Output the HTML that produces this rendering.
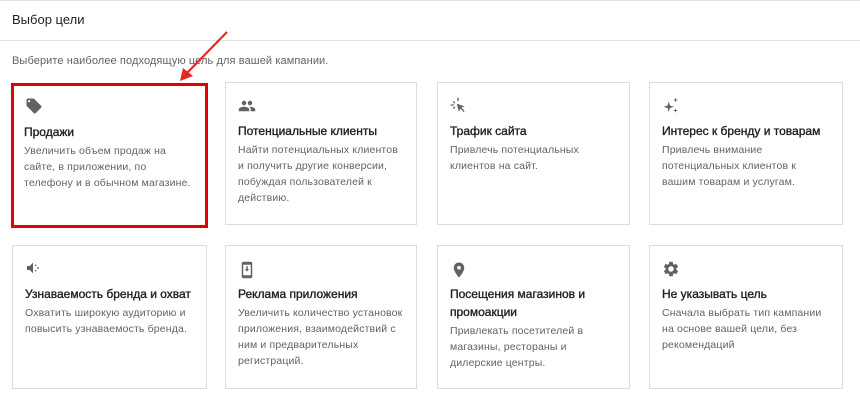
<!DOCTYPE html>
<html><head><meta charset="utf-8"><style>
body{margin:0;width:860px;height:407px;background:#fff;font-family:"Liberation Sans",Arial,sans-serif;position:relative;overflow:hidden}
.top{position:absolute;left:0;top:0;width:860px;height:1px;background:#e0e0e0}
.h{position:absolute;left:12px;top:12px;font-size:13px;color:#212121}
.sep{position:absolute;left:0;top:40px;width:860px;height:1px;background:#e0e0e0}
.sub{position:absolute;left:12px;top:55px;font-size:11px;color:#5f6368;letter-spacing:.1px}
.c{position:absolute;border:1px solid #dadce0;box-sizing:border-box;background:#fff}
.c svg{position:absolute;left:12px;top:14px}
.t{position:absolute;left:12px;top:39px;font-size:12px;color:#202124;line-height:18px;width:170px;-webkit-text-stroke:0.35px #202124}
.d{position:absolute;left:12px;font-size:10.5px;color:#5f6368;line-height:16px;width:170px;letter-spacing:.15px}
.red{border:3px solid #e50000}
</style></head><body>
<div class="top"></div>
<div class="h">Выбор цели</div>
<div class="sep"></div>
<div class="sub">Выберите наиболее подходящую цель для вашей кампании.</div>

<div class="c red" style="left:11px;top:83px;width:197px;height:145px">
<svg width="20" height="18" viewBox="0 0 24 24" style="left:10px;top:11px"><path fill="#5f6368" d="M21.4 11.6l-9-9C12.1 2.2 11.6 2 11 2H4c-1.1 0-2 .9-2 2v7c0 .6.2 1.1.6 1.4l9 9c.4.4.9.6 1.4.6s1-.2 1.4-.6l7-7c.4-.4.6-.9.6-1.4s-.2-1.1-.6-1.4zM5.5 7C4.7 7 4 6.3 4 5.5S4.7 4 5.5 4 7 4.7 7 5.5 6.3 7 5.5 7z"/></svg>
<div class="t" style="left:10px;top:37px">Продажи</div>
<div class="d" style="left:10px;top:57px">Увеличить объем продаж на сайте, в приложении, по телефону и в обычном магазине.</div>
</div>

<div class="c" style="left:225px;top:82px;width:192px;height:143px">
<svg width="18" height="18" viewBox="0 0 24 24"><path fill="#5f6368" d="M16 11c1.66 0 2.99-1.34 2.99-3S17.66 5 16 5c-1.66 0-3 1.34-3 3s1.34 3 3 3zm-8 0c1.66 0 2.99-1.34 2.99-3S9.66 5 8 5C6.34 5 5 6.34 5 8s1.34 3 3 3zm0 2c-2.33 0-7 1.17-7 3.5V19h14v-2.5c0-2.33-4.67-3.5-7-3.5zm8 0c-.29 0-.62.02-.97.05 1.16.84 1.97 1.970 1.97 3.45V19h6v-2.5c0-2.33-4.67-3.5-7-3.5z"/></svg>
<div class="t">Потенциальные клиенты</div>
<div class="d" style="top:59px;width:162px">Найти потенциальных клиентов и получить другие конверсии, побуждая пользователей к действию.</div>
</div>

<div class="c" style="left:437px;top:82px;width:193px;height:143px">
<svg width="16" height="16" viewBox="0 0 24 24"><path fill="#5f6368" d="M11 6h2V1h-2zM4 7.4L5.4 6 8 8.6 6.6 10zM1 11h5v2H1zM6.6 14L8 15.4 5.4 18 4 16.6zM10 10l12 4-5 2 5 5-1.5 1.5-5-5-2 5z"/></svg>
<div class="t">Трафик сайта</div>
<div class="d" style="top:59px;width:150px">Привлечь потенциальных клиентов на сайт.</div>
</div>

<div class="c" style="left:649px;top:82px;width:194px;height:143px">
<svg width="18" height="18" viewBox="0 0 24 24"><path fill="#5f6368" d="M9 6l1.6 5.4L16 13l-5.4 1.6L9 20l-1.6-5.4L2 13l5.4-1.6zM18 1l.8 2.2L21 4l-2.2.8L18 7l-.8-2.2L15 4l2.2-.8zM18 15l.8 2.2L21 18l-2.2.8L18 21l-.8-2.2L15 18l2.2-.8z"/></svg>
<div class="t">Интерес к бренду и товарам</div>
<div class="d" style="top:59px;width:150px">Привлечь внимание потенциальных клиентов к вашим товарам и услугам.</div>
</div>

<div class="c" style="left:12px;top:245px;width:195px;height:144px">
<svg width="16" height="16" viewBox="0 0 24 24"><path fill="#5f6368" d="M3 9v6h4l5 5V4L7 9z M15 7h2v2h-2zM18 11h3v2h-3zM15 15h2v2h-2z"/></svg>
<div class="t" style="width:180px">Узнаваемость бренда и охват</div>
<div class="d" style="top:59px">Охватить широкую аудиторию и повысить узнаваемость бренда.</div>
</div>

<div class="c" style="left:225px;top:245px;width:192px;height:144px">
<svg width="18" height="20" viewBox="0 0 24 24"><path fill="#5f6368" d="M17 1H7C5.9 1 5 1.9 5 3v18c0 1.1.9 2 2 2h10c1.1 0 2-.9 2-2V3c0-1.1-.9-2-2-2zm0 18H7V5h10zM13 7h-2v4H9l3 3 3-3h-2z"/></svg>
<div class="t">Реклама приложения</div>
<div class="d" style="top:59px">Увеличить количество установок приложения, взаимодействий с ним и предварительных регистраций.</div>
</div>

<div class="c" style="left:437px;top:245px;width:193px;height:144px">
<svg width="18" height="20" viewBox="0 0 24 24"><path fill="#5f6368" d="M12 2C8.13 2 5 5.13 5 9c0 5.25 7 13 7 13s7-7.75 7-13c0-3.87-3.13-7-7-7zm0 9.5c-1.38 0-2.5-1.12-2.5-2.5s1.12-2.5 2.5-2.5 2.5 1.12 2.5 2.5-1.12 2.5-2.5 2.5z"/></svg>
<div class="t" style="width:160px">Посещения магазинов и промоакции</div>
<div class="d" style="top:77px;width:150px">Привлекать посетителей в магазины, рестораны и дилерские центры.</div>
</div>

<div class="c" style="left:649px;top:245px;width:194px;height:144px">
<svg width="18" height="18" viewBox="0 0 24 24"><path fill="#5f6368" d="M19.14 12.94c.04-.3.06-.61.06-.94 0-.32-.02-.64-.07-.94l2.03-1.58c.18-.14.23-.41.12-.61l-1.92-3.32c-.12-.22-.37-.29-.59-.22l-2.39.96c-.5-.38-1.03-.7-1.62-.94l-.36-2.54c-.04-.24-.24-.41-.48-.41h-3.84c-.24 0-.43.17-.47.41l-.36 2.54c-.59.24-1.13.57-1.62.94l-2.39-.96c-.22-.08-.47 0-.59.22L2.74 8.87c-.12.21-.08.47.12.61l2.03 1.58c-.05.3-.09.63-.09.94s.02.64.07.94l-2.03 1.58c-.18.14-.23.41-.12.61l1.92 3.32c.12.22.37.29.59.22l2.39-.96c.5.38 1.03.7 1.62.94l.36 2.54c.05.24.24.41.48.41h3.84c.24 0 .44-.17.47-.41l.36-2.54c.59-.24 1.13-.56 1.62-.94l2.39.96c.22.08.47 0 .59-.22l1.92-3.32c.12-.22.07-.47-.12-.61zM12 15.6c-1.98 0-3.6-1.62-3.6-3.6s1.62-3.6 3.6-3.6 3.6 1.62 3.6 3.6-1.62 3.6-3.6 3.6z"/></svg>
<div class="t">Не указывать цель</div>
<div class="d" style="top:59px">Сначала выбрать тип кампании на основе вашей цели, без рекомендаций</div>
</div>

<svg width="860" height="407" style="position:absolute;left:0;top:0;pointer-events:none">
<line x1="227" y1="32" x2="186" y2="74" stroke="#e8271f" stroke-width="2.2"/>
<polygon points="180,81 183,68 193,76" fill="#e8271f"/>
</svg>
</body></html>
